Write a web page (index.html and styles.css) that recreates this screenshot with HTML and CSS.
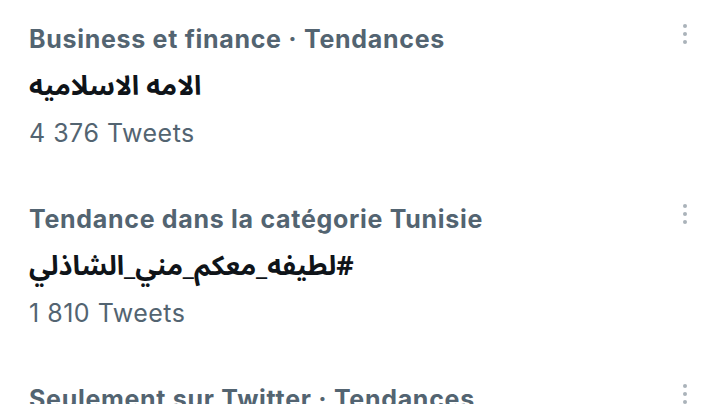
FILE: index.html
```html
<!DOCTYPE html>
<html lang="fr">
<head>
<meta charset="utf-8">
<link rel="stylesheet" href="styles.css">
</head>
<body>
<div class="list">
  <div class="trend">
    <div class="texts">
      <div class="meta">Business et finance · Tendances</div>
      <div class="name" dir="rtl">الامه الاسلاميه</div>
      <div class="count">4 376 Tweets</div>
    </div>
    <div class="more"><span></span><span></span><span></span></div>
  </div>
  <div class="trend">
    <div class="texts">
      <div class="meta">Tendance dans la catégorie Tunisie</div>
      <div class="name" dir="rtl">#لطيفه_معكم_مني_الشاذلي</div>
      <div class="count">1 810 Tweets</div>
    </div>
    <div class="more"><span></span><span></span><span></span></div>
  </div>
  <div class="trend">
    <div class="texts">
      <div class="meta">Seulement sur Twitter · Tendances</div>
    </div>
    <div class="more"><span></span><span></span><span></span></div>
  </div>
</div>
</body>
</html>
```
FILE: styles.css
```css
html, body {
  margin: 0;
  padding: 0;
  background: #ffffff;
}
body {
  width: 720px;
  height: 404px;
  overflow: hidden;
  font-family: Inter, Roboto, "Noto Sans", sans-serif;
}
.list {
  display: flex;
  flex-direction: column;
}
.trend {
  display: flex;
  justify-content: space-between;
  align-items: flex-start;
  padding: 16px 32px 23px 29px;
  height: 141px;
  flex-shrink: 0;
}
.texts {
  display: flex;
  flex-direction: column;
}
.meta {
  font-size: 25px;
  font-weight: 700;
  letter-spacing: 0.7px;
  line-height: 47px;
  color: #536471;
  white-space: nowrap;
}
.name {
  font-family: "Noto Sans Arabic", "DejaVu Sans", sans-serif;
  font-size: 27px;
  font-weight: 700;
  line-height: 47px;
  color: #0f1419;
  text-align: left;
  align-self: flex-start;
}
.count {
  font-size: 25px;
  font-weight: 400;
  letter-spacing: 0.5px;
  line-height: 47px;
  color: #536471;
}
.more {
  display: flex;
  flex-direction: column;
  gap: 4px;
  padding-top: 8px;
  width: 6px;
  align-items: center;
}
.more span {
  width: 4px;
  height: 4px;
  border-radius: 50%;
  background: #aab3ba;
}
```
